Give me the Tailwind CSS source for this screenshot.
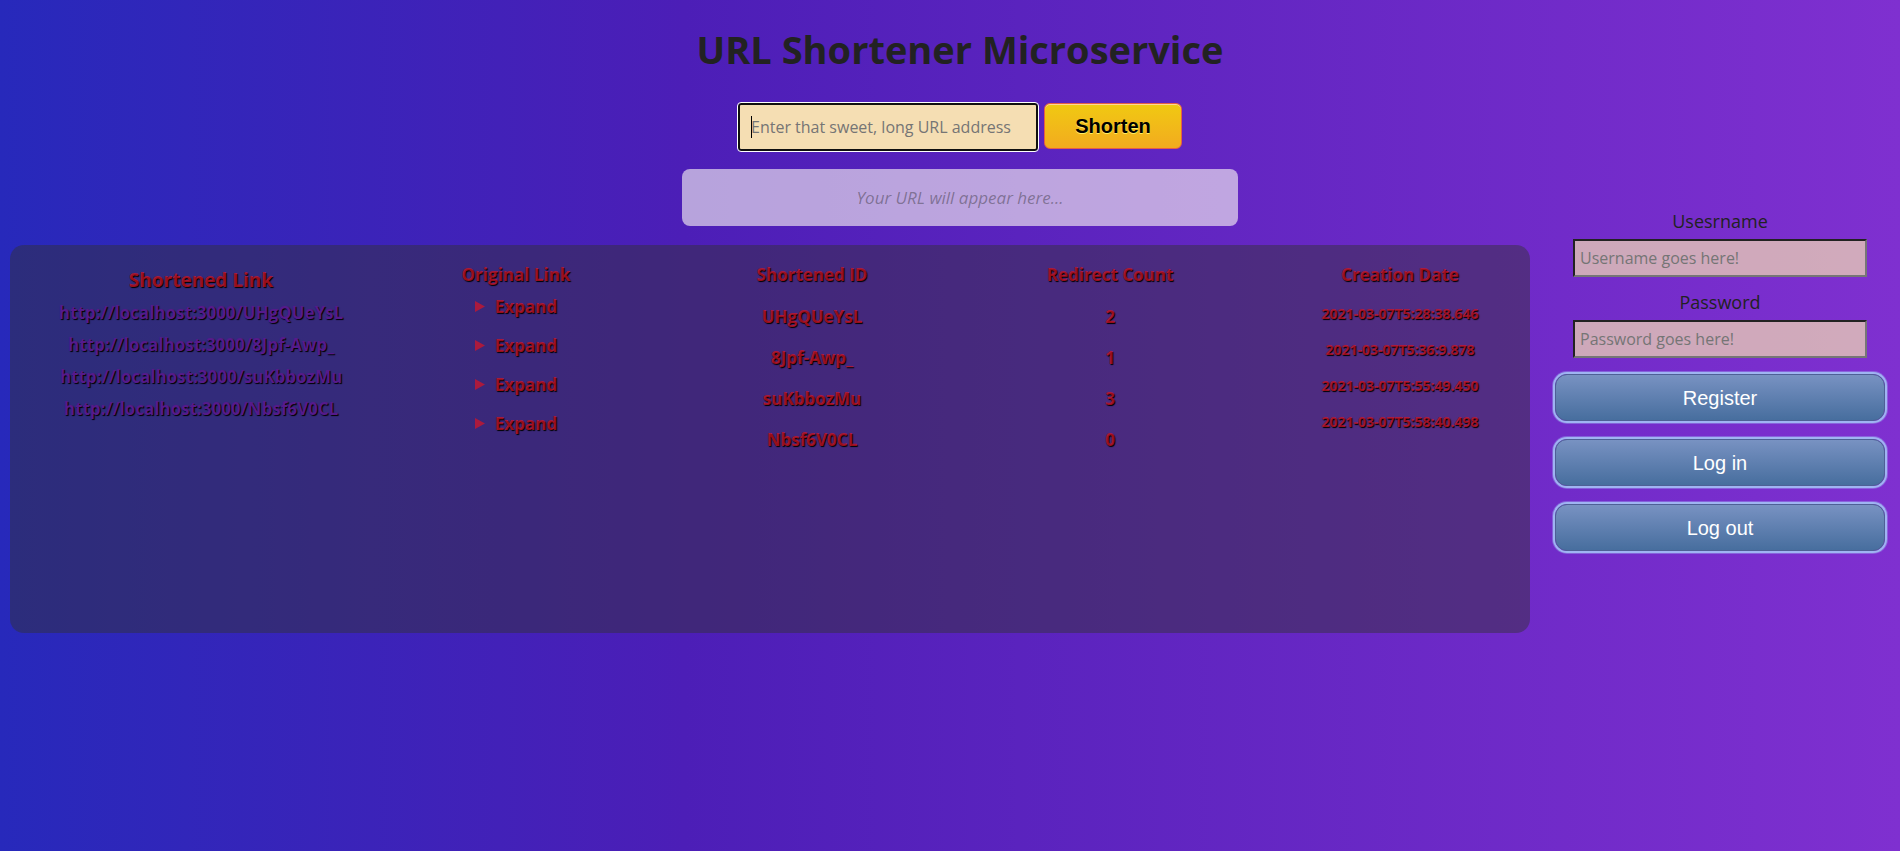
<!DOCTYPE html>
<html lang="en">
<head>
<meta charset="utf-8">
<meta name="viewport" content="width=device-width, initial-scale=1">
<title>URL Shortener Microservice</title>
<script src="https://cdn.jsdelivr.net/npm/@tailwindcss/browser@4"></script>
</head>
<body class="min-h-screen overflow-x-hidden bg-linear-[90deg,#2729bb_0%,#4c1eb7_36%,#7f30d0_100%] font-['Open_Sans','Noto_Sans',sans-serif] text-[#222]">
<div class="ml-2.5 w-full">
  <header class="flex flex-col items-center pt-[22px]">
    <h1 class="text-[38px] leading-[54px] font-bold">URL Shortener Microservice</h1>
    <form class="mt-[27px] flex items-start gap-[6px]" onsubmit="return false">
      <div class="relative">
        <input type="text" aria-label="URL address" placeholder="Enter that sweet, long URL address" class="block h-12 w-[300px] rounded-[3px] border-2 border-[#101010] bg-[#f5deb3] px-[11px] text-base outline-1 outline-white placeholder:text-[#757575]">
        <span class="pointer-events-none absolute top-[13px] left-[13px] h-[22px] w-px bg-black"></span>
      </div>
      <button type="submit" class="h-[46px] w-[138px] rounded-md border border-[#e65f44] bg-linear-to-b from-[#f0c911] to-[#f2ab1e] font-['Liberation_Sans',sans-serif] text-[20px] font-bold text-black shadow-[inset_0_1px_0_#fed897] [text-shadow:0_1px_0_#ffee66]">Shorten</button>
    </form>
    <output class="mt-[18px] block h-[57px] w-[556px] max-w-full rounded-lg bg-[#fffbf5]/60 text-center text-[17px] leading-[57px] text-[#222]/40 italic">Your URL will appear here...</output>
  </header>
  <div class="mt-[19px] flex items-start">
    <main class="grid h-[388px] w-4/5 grid-cols-[298fr_332fr_260fr_336fr_244fr] rounded-[14px] bg-[#333]/46 pt-[18px] pr-2 pl-[42px] text-center text-[17px] font-bold text-[rgba(220,20,35,0.7)] [text-shadow:1px_1px_1px_black]">
      <section>
        <h2 class="text-[19px] leading-[34px]">Shortened Link</h2>
        <ul class="leading-8 text-[#551a8b]">
          <li><a href="#">http://localhost:3000/UHgQUeYsL</a></li>
          <li><a href="#">http://localhost:3000/8Jpf-Awp_</a></li>
          <li><a href="#">http://localhost:3000/suKbbozMu</a></li>
          <li><a href="#">http://localhost:3000/Nbsf6V0CL</a></li>
        </ul>
      </section>
      <section>
        <h2 class="leading-6">Original Link</h2>
        <ul class="leading-[39px]">
          <li><details><summary class="flex items-center justify-center gap-[10px]"><svg class="h-[11px] w-[10px]" viewBox="0 0 10 11" fill="currentColor" aria-hidden="true"><path d="M0 0L10 5.5L0 11Z"/></svg>Expand</summary></details></li>
          <li><details><summary class="flex items-center justify-center gap-[10px]"><svg class="h-[11px] w-[10px]" viewBox="0 0 10 11" fill="currentColor" aria-hidden="true"><path d="M0 0L10 5.5L0 11Z"/></svg>Expand</summary></details></li>
          <li><details><summary class="flex items-center justify-center gap-[10px]"><svg class="h-[11px] w-[10px]" viewBox="0 0 10 11" fill="currentColor" aria-hidden="true"><path d="M0 0L10 5.5L0 11Z"/></svg>Expand</summary></details></li>
          <li><details><summary class="flex items-center justify-center gap-[10px]"><svg class="h-[11px] w-[10px]" viewBox="0 0 10 11" fill="currentColor" aria-hidden="true"><path d="M0 0L10 5.5L0 11Z"/></svg>Expand</summary></details></li>
        </ul>
      </section>
      <section>
        <h2 class="leading-6">Shortened ID</h2>
        <ul class="mt-[9px] leading-[41px]">
          <li>UHgQUeYsL</li>
          <li>8Jpf-Awp_</li>
          <li>suKbbozMu</li>
          <li>Nbsf6V0CL</li>
        </ul>
      </section>
      <section>
        <h2 class="leading-6">Redirect Count</h2>
        <ul class="mt-[9px] leading-[41px]">
          <li>2</li>
          <li>1</li>
          <li>3</li>
          <li>0</li>
        </ul>
      </section>
      <section>
        <h2 class="leading-6">Creation Date</h2>
        <ul class="mt-[9px] text-sm">
          <li class="leading-9">2021-03-07T5:28:38.646</li>
          <li class="leading-9">2021-03-07T5:36:9.878</li>
          <li class="leading-9">2021-03-07T5:55:49.450</li>
          <li class="leading-9">2021-03-07T5:58:40.498</li>
        </ul>
      </section>
    </main>
    <aside class="-mt-[38px] w-1/5 px-[25px]">
      <form class="flex flex-col text-center" onsubmit="return false">
        <label for="username" class="text-lg leading-7">Usesrname</label>
        <input id="username" type="text" placeholder="Username goes here!" class="mx-[18px] mt-1 h-[38px] border-2 border-t-[#222] border-r-[#767676] border-b-[#767676] border-l-[#222] bg-[#f5deb3]/70 px-[5px] text-base placeholder:text-[#757575]">
        <label for="password" class="mt-[11px] text-lg leading-7">Password</label>
        <input id="password" type="password" placeholder="Password goes here!" class="mx-[18px] mt-1 h-[38px] border-2 border-t-[#222] border-r-[#767676] border-b-[#767676] border-l-[#222] bg-[#f5deb3]/70 px-[5px] text-base placeholder:text-[#757575]">
        <div class="mt-4 flex flex-col gap-[18px] font-['Liberation_Sans',sans-serif] text-[20px] text-white [text-shadow:0_1px_0_#283966]">
          <button type="button" class="h-[47px] rounded-xl border border-[#4e6096] bg-linear-to-b from-[#7892c2] to-[#476e9e] shadow-[0_0_0_2px_#9fb4f2,0_0_0_3px_#9fb4f266]">Register</button>
          <button type="button" class="h-[47px] rounded-xl border border-[#4e6096] bg-linear-to-b from-[#7892c2] to-[#476e9e] shadow-[0_0_0_2px_#9fb4f2,0_0_0_3px_#9fb4f266]">Log in</button>
          <button type="button" class="h-[47px] rounded-xl border border-[#4e6096] bg-linear-to-b from-[#7892c2] to-[#476e9e] shadow-[0_0_0_2px_#9fb4f2,0_0_0_3px_#9fb4f266]">Log out</button>
        </div>
      </form>
    </aside>
  </div>
</div>
</body>
</html>
